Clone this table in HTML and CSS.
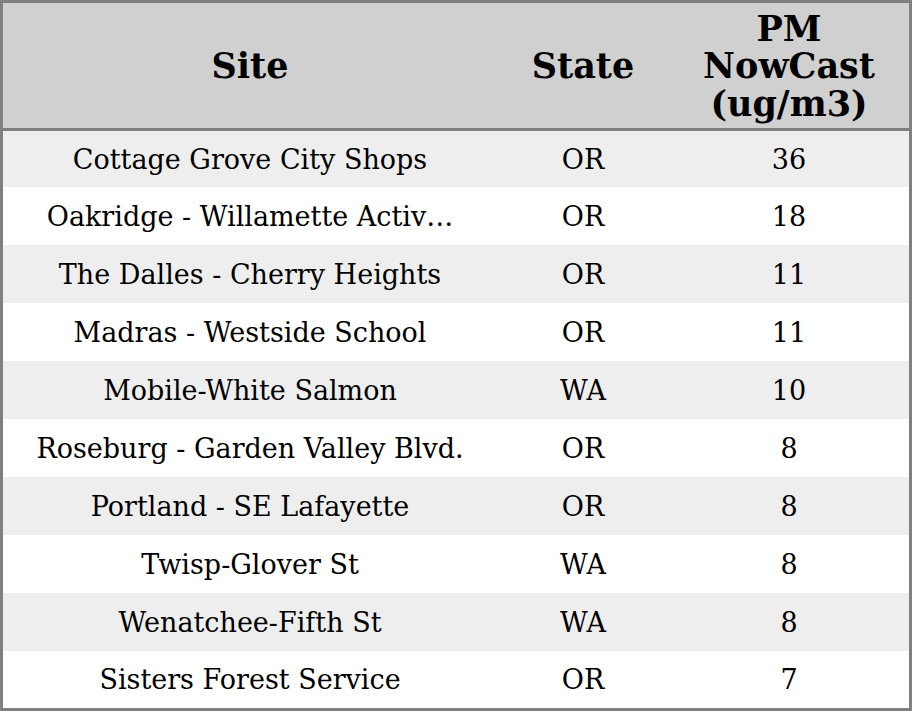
FILE: index.html
```html
<!DOCTYPE html>
<html>
<head>
<meta charset="utf-8">
<link rel="stylesheet" href="styles.css">
</head>
<body>
<div class="table">
  <div class="head">
    <div class="hcell">Site</div>
    <div class="hcell">State</div>
    <div class="hcell">PM NowCast (ug/m3)</div>
  </div>
  <div class="body">
    <div class="row first"><div class="cell">Cottage Grove City Shops</div><div class="cell">OR</div><div class="cell">36</div></div>
    <div class="row"><div class="cell">Oakridge - Willamette Activ…</div><div class="cell">OR</div><div class="cell">18</div></div>
    <div class="row"><div class="cell">The Dalles - Cherry Heights</div><div class="cell">OR</div><div class="cell">11</div></div>
    <div class="row"><div class="cell">Madras - Westside School</div><div class="cell">OR</div><div class="cell">11</div></div>
    <div class="row"><div class="cell">Mobile-White Salmon</div><div class="cell">WA</div><div class="cell">10</div></div>
    <div class="row"><div class="cell">Roseburg - Garden Valley Blvd.</div><div class="cell">OR</div><div class="cell">8</div></div>
    <div class="row"><div class="cell">Portland - SE Lafayette</div><div class="cell">OR</div><div class="cell">8</div></div>
    <div class="row"><div class="cell">Twisp-Glover St</div><div class="cell">WA</div><div class="cell">8</div></div>
    <div class="row"><div class="cell">Wenatchee-Fifth St</div><div class="cell">WA</div><div class="cell">8</div></div>
    <div class="row last"><div class="cell">Sisters Forest Service</div><div class="cell">OR</div><div class="cell">7</div></div>
  </div>
</div>
</body>
</html>
```
FILE: styles.css
```css
html, body {
  margin: 0;
  padding: 0;
  background: #ffffff;
}
.table {
  width: 912px;
  height: 711px;
  box-sizing: border-box;
  border: 3px solid #808080;
  font-family: "DejaVu Serif", serif;
  color: #000;
  overflow: hidden;
}
.head {
  display: grid;
  grid-template-columns: 494px 172px 240px;
  height: 125px;
  background: #d0d0d0;
  border-bottom: 3px solid #808080;
}
.hcell {
  display: flex;
  align-items: center;
  justify-content: center;
  text-align: center;
  font-weight: bold;
  font-size: 35px;
  line-height: 37.5px;
  padding: 1px 16px 0;
}
.row {
  display: grid;
  grid-template-columns: 494px 172px 240px;
  height: 58px;
  font-size: 27px;
  line-height: 58px;
}
.row.first { height: 56px; line-height: 56px; }
.row.last { height: 57px; line-height: 56px; }
.row:nth-child(odd) { background: #eeeeee; }
.cell {
  text-align: center;
  padding: 1px 16px 0;
  white-space: nowrap;
  overflow: hidden;
  min-width: 0;
}
```
